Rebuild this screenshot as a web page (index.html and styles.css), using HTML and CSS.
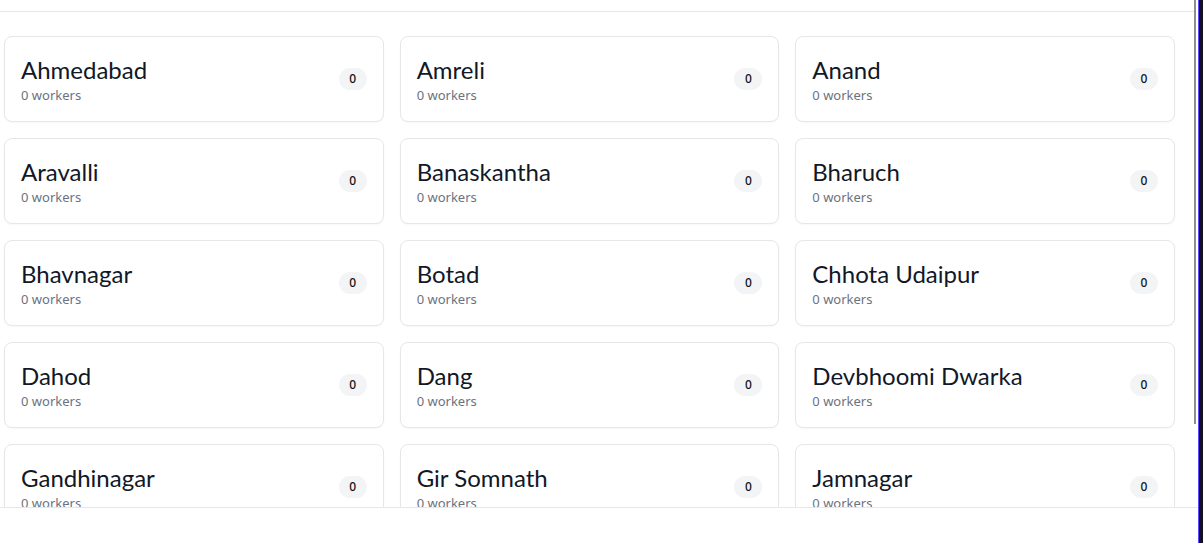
FILE: index.html
```html
<!DOCTYPE html>
<html lang="en">
<head>
<meta charset="utf-8">
<title>Districts</title>
<link rel="stylesheet" href="styles.css">
</head>
<body>
<div class="shell">
  <div class="topbar"></div>
  <main class="main">
    <div class="grid">
      <div class="card"><div class="info"><div class="name">Ahmedabad</div><div class="sub">0 workers</div></div><span class="badge">0</span></div>
      <div class="card"><div class="info"><div class="name">Amreli</div><div class="sub">0 workers</div></div><span class="badge">0</span></div>
      <div class="card"><div class="info"><div class="name">Anand</div><div class="sub">0 workers</div></div><span class="badge">0</span></div>
      <div class="card"><div class="info"><div class="name">Aravalli</div><div class="sub">0 workers</div></div><span class="badge">0</span></div>
      <div class="card"><div class="info"><div class="name">Banaskantha</div><div class="sub">0 workers</div></div><span class="badge">0</span></div>
      <div class="card"><div class="info"><div class="name">Bharuch</div><div class="sub">0 workers</div></div><span class="badge">0</span></div>
      <div class="card"><div class="info"><div class="name">Bhavnagar</div><div class="sub">0 workers</div></div><span class="badge">0</span></div>
      <div class="card"><div class="info"><div class="name">Botad</div><div class="sub">0 workers</div></div><span class="badge">0</span></div>
      <div class="card"><div class="info"><div class="name">Chhota Udaipur</div><div class="sub">0 workers</div></div><span class="badge">0</span></div>
      <div class="card"><div class="info"><div class="name">Dahod</div><div class="sub">0 workers</div></div><span class="badge">0</span></div>
      <div class="card"><div class="info"><div class="name">Dang</div><div class="sub">0 workers</div></div><span class="badge">0</span></div>
      <div class="card"><div class="info"><div class="name">Devbhoomi Dwarka</div><div class="sub">0 workers</div></div><span class="badge">0</span></div>
      <div class="card"><div class="info"><div class="name">Gandhinagar</div><div class="sub">0 workers</div></div><span class="badge">0</span></div>
      <div class="card"><div class="info"><div class="name">Gir Somnath</div><div class="sub">0 workers</div></div><span class="badge">0</span></div>
      <div class="card"><div class="info"><div class="name">Jamnagar</div><div class="sub">0 workers</div></div><span class="badge">0</span></div>
      <div class="card"><div class="info"><div class="name">Junagadh</div><div class="sub">0 workers</div></div><span class="badge">0</span></div>
      <div class="card"><div class="info"><div class="name">Kheda</div><div class="sub">0 workers</div></div><span class="badge">0</span></div>
      <div class="card"><div class="info"><div class="name">Kutch</div><div class="sub">0 workers</div></div><span class="badge">0</span></div>
    </div>
  </main>
  <footer class="footer"></footer>
  <div class="thumb"></div>
</div>
<div class="edge"></div>
</body>
</html>
```

FILE: styles.css
```css
* { box-sizing: border-box; }
html, body { margin: 0; padding: 0; height: 100%; }
body {
  display: flex;
  height: 543px;
  overflow: hidden;
  background: #fff;
  font-family: "Noto Sans", "Open Sans", sans-serif;
  color: #111827;
}
.shell {
  position: relative;
  width: 1198px;
  display: flex;
  flex-direction: column;
}
.topbar {
  height: 12px;
  margin-right: 4px;
  border-bottom: 1px solid #e5e7eb;
  flex: none;
}
.main {
  height: 495px;
  flex: none;
  overflow: hidden;
  padding: 24px 0 0 4px;
}
.grid {
  width: 1171px;
  display: grid;
  grid-template-columns: repeat(3, 1fr);
  gap: 16px;
}
.card {
  height: 86px;
  border: 1px solid #e5e7eb;
  border-radius: 8px;
  background: #fff;
  padding: 16px;
  display: flex;
  align-items: center;
  justify-content: space-between;
  box-shadow: 0 1px 2px rgba(0,0,0,0.03);
}
.name {
  font-family: "Lato", "Noto Sans", sans-serif;
  font-size: 24px;
  line-height: 32px;
  padding-top: 1px;
  color: #111827;
}
.sub {
  font-size: 13px;
  line-height: 19px;
  color: #6b7280;
}
.badge {
  min-width: 28px;
  height: 22px;
  padding: 0 10px;
  border-radius: 11px;
  background: #f3f4f6;
  font-size: 12px;
  font-weight: 500;
  line-height: 22px;
  text-align: center;
  color: #111;
}
.footer {
  flex: 1;
  border-top: 1px solid #e5e7eb;
}
.thumb {
  position: absolute;
  top: 0;
  left: 1194px;
  width: 2px;
  height: 424px;
  background: #8e8e8e;
}
.edge {
  width: 5px;
  flex: none;
  background: #121028;
  border-left: 1px solid #5b48ff;
}
```
